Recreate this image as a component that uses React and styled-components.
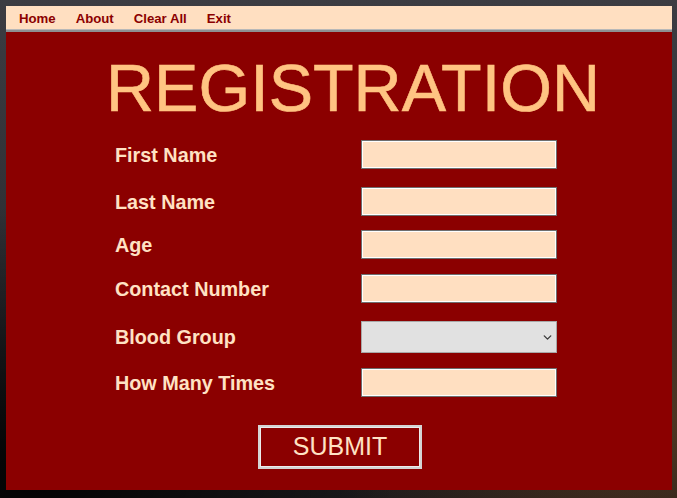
import styled, { createGlobalStyle } from "styled-components"
import { ChevronDown } from "lucide-react"

const GlobalStyle = createGlobalStyle`
  html, body {
    margin: 0;
    padding: 0;
    height: 100%;
  }
  body {
    font-family: "Liberation Sans", Arial, sans-serif;
    background:
      radial-gradient(ellipse at 95% 85%, rgba(120, 70, 30, 0.55), transparent 35%),
      radial-gradient(ellipse at 5% 95%, rgba(0, 0, 0, 0.9), transparent 40%),
      linear-gradient(180deg, #3c3c42 0%, #2c2c31 60%, #1a1a1c 100%);
  }
`

const fields = [
  { label: "First Name", mt: 0 },
  { label: "Last Name", mt: 18 },
  { label: "Age", mt: 14 },
  { label: "Contact Number", mt: 15 },
  { label: "Blood Group", mt: 18, select: true },
  { label: "How Many Times", mt: 15 },
]

function App() {
  return (
    <>
      <GlobalStyle />
      <Page>
        <MenuBar>
          <MenuItem>Home</MenuItem>
          <MenuItem>About</MenuItem>
          <MenuItem>Clear All</MenuItem>
          <MenuItem>Exit</MenuItem>
        </MenuBar>
        <Panel>
          <Title>REGISTRATION</Title>
          <Form>
            {fields.map((f) => (
              <Row key={f.label} $mt={f.mt}>
                <Label>{f.label}</Label>
                {f.select ? (
                  <SelectWrap>
                    <Select defaultValue="">
                      <option value=""></option>
                      <option>A+</option>
                      <option>A-</option>
                      <option>B+</option>
                      <option>B-</option>
                      <option>AB+</option>
                      <option>AB-</option>
                      <option>O+</option>
                      <option>O-</option>
                    </Select>
                    <Arrow>
                      <ChevronDown size={13} strokeWidth={2.5} />
                    </Arrow>
                  </SelectWrap>
                ) : (
                  <Input type="text" />
                )}
              </Row>
            ))}
          </Form>
          <SubmitButton>SUBMIT</SubmitButton>
        </Panel>
      </Page>
    </>
  )
}

const Page = styled.div`
  padding: 6px 5px 8px 6px;
  display: flex;
  flex-direction: column;
`

const MenuBar = styled.div`
  height: 24px;
  background: #ffdfc1;
  border-bottom: 2px solid #8e8f91;
  box-shadow: inset 0 -1px 0 #b8b8b8;
  display: flex;
  align-items: center;
  padding-left: 3px;
`

const MenuItem = styled.span`
  font-size: 13.2px;
  font-weight: bold;
  color: #8b0000;
  padding: 0 10px;
  cursor: pointer;
`

const Panel = styled.div`
  background: #8b0000;
  height: 458px;
  box-sizing: border-box;
  padding-top: 23px;
  display: flex;
  flex-direction: column;
`

const Title = styled.h1`
  margin: 0 0 18px 0;
  padding-left: 28px;
  text-align: center;
  font-size: 66.5px;
  line-height: 1;
  font-weight: normal;
  color: #ffc482;
  -webkit-text-stroke: 0.6px #ffc482;
`

const Form = styled.div`
  display: flex;
  flex-direction: column;
  padding-left: 109px;
`

const Row = styled.div`
  display: grid;
  grid-template-columns: 246px 196px;
  align-items: center;
  margin-top: ${(p) => p.$mt}px;
`

const Label = styled.label`
  padding-top: 2px;
  font-size: 19.8px;
  font-weight: bold;
  color: #ffe2c4;
`

const Input = styled.input`
  box-sizing: border-box;
  width: 196px;
  height: 29px;
  margin: 0;
  background: #ffdfc1;
  border: 1px solid #6e6e6e;
  box-shadow: inset 1px 1px 0 #fff, inset -1px -1px 0 #fff;
  outline: none;
`

const SelectWrap = styled.div`
  position: relative;
  width: 196px;
  height: 32px;
`

const Select = styled.select`
  appearance: none;
  box-sizing: border-box;
  width: 100%;
  height: 100%;
  margin: 0;
  background: #e1e1e1;
  border: 1px solid #a8a8a8;
  outline: none;
`

const Arrow = styled.span`
  position: absolute;
  right: 3px;
  top: 10px;
  color: #3a3a3a;
  display: flex;
  pointer-events: none;
`

const SubmitButton = styled.button`
  align-self: center;
  margin-top: 28px;
  margin-left: 2px;
  box-sizing: border-box;
  width: 164px;
  height: 44px;
  background: #8b0000;
  border: 2px solid #d4d4d4;
  box-shadow: inset 0 0 0 1px #ececec;
  color: #ffe2c4;
  font-family: "Liberation Sans", Arial, sans-serif;
  font-size: 25px;
  cursor: pointer;
`

export default App
